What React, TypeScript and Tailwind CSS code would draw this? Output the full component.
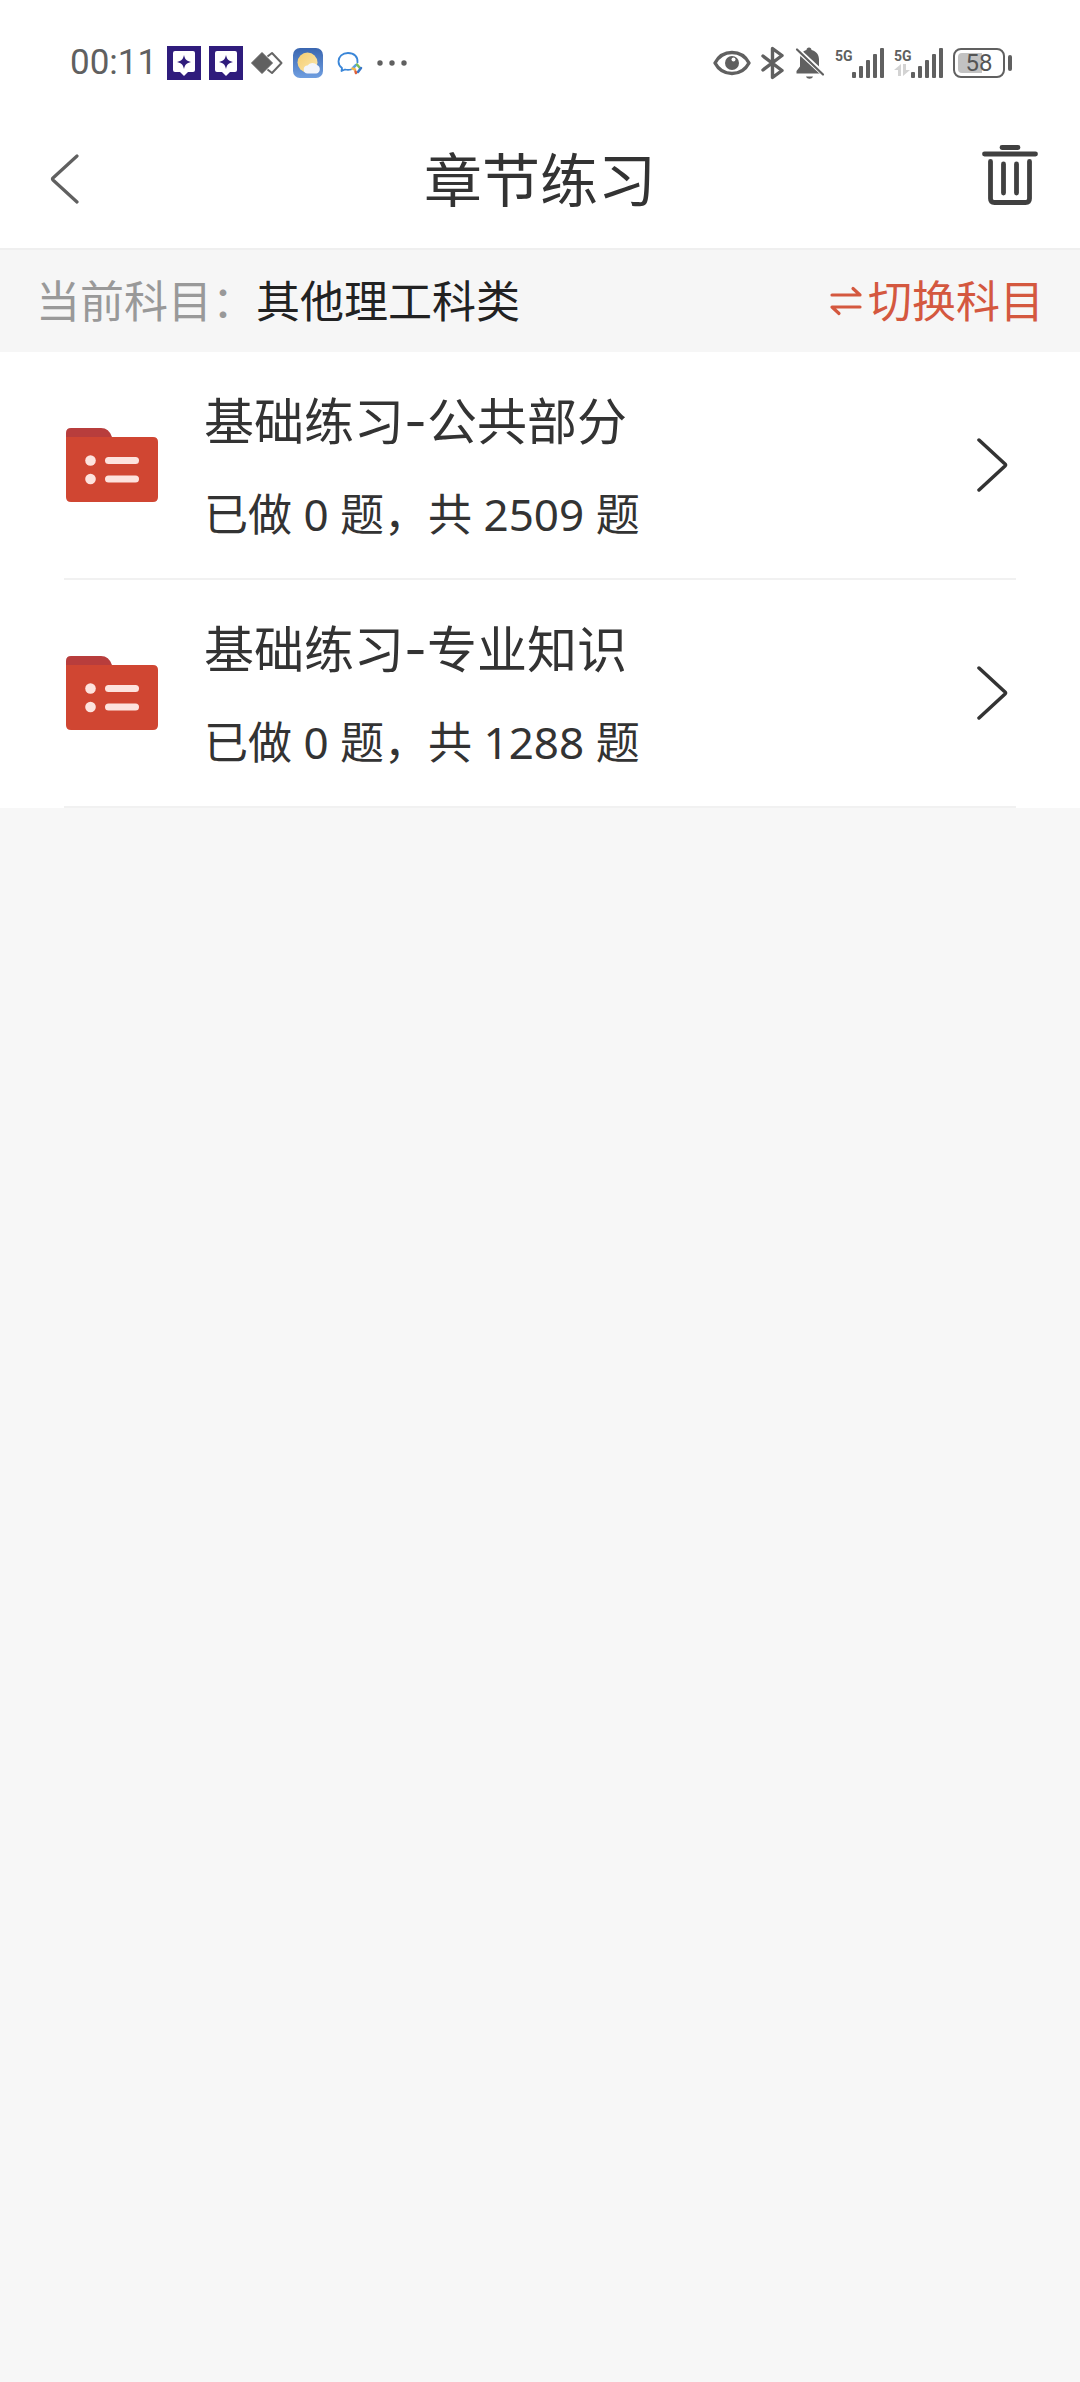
const chapters = [
  { id: 1, title: '基础练习', section: '公共部分', done: 0, total: 2509 },
  { id: 2, title: '基础练习', section: '专业知识', done: 0, total: 1288 },
]

function AppBadge() {
  return (
    <svg className="w-[34px] h-[34px]" viewBox="0 0 34 34" aria-hidden="true">
      <rect width="34" height="34" fill="#2f1c7c" />
      <path d="M8 5h18a2 2 0 0 1 2 2v17a2 2 0 0 1-2 2h-5l-4 4-4-4H8a2 2 0 0 1-2-2V7a2 2 0 0 1 2-2z" fill="#fff" />
      <path d="M17 9c1 4.500 2.500 6 7 7-4.500 1-6 2.500-7 7-1-4.500-2.500-6-7-7 4.500-1 6-2.500 7-7z" fill="#2f1c7c" />
    </svg>
  )
}

function DiamondsIcon() {
  return (
    <svg className="w-8 h-[34px]" viewBox="0 0 32 34" aria-hidden="true">
      <path d="M16.500 10.500 21 7l9.500 10L21 27l-4.500-3.500" fill="none" stroke="#666" strokeWidth="2" strokeLinejoin="round" />
      <path d="M11 6.500 21.500 17 11 27.500.5 17z" fill="#606060" stroke="#606060" strokeLinejoin="round" />
    </svg>
  )
}

function WeatherIcon() {
  return (
    <svg className="w-[30px] h-[30px]" viewBox="0 0 30 30" aria-hidden="true">
      <defs>
        <linearGradient id="sky" x1="0" y1="0" x2="0" y2="1">
          <stop offset="0" stopColor="#3a66b0" />
          <stop offset="1" stopColor="#6f9ee0" />
        </linearGradient>
        <linearGradient id="sun" x1="0" y1="0" x2="1" y2="1">
          <stop offset="0" stopColor="#f5cd70" />
          <stop offset="1" stopColor="#fbe6ae" />
        </linearGradient>
      </defs>
      <rect width="30" height="30" rx="7" fill="url(#sky)" />
      <circle cx="14.500" cy="14.500" r="10" fill="url(#sun)" />
      <path d="M15 25.500a4 4 0 0 1-.5-8 6 6 0 0 1 9.500-.5 4.500 4.500 0 0 1-.5 8.500z" fill="#f3f5fb" />
    </svg>
  )
}

function ChatIcon() {
  return (
    <svg className="w-[26px] h-[34px]" viewBox="0 0 26 34" fill="none" strokeLinecap="round" aria-hidden="true">
      <path d="M20.500 16.500C21 10.500 17 7 11 7 5.500 7 1.500 10.500 1.500 15.500c0 3 1.500 5 3.500 6.500L4.500 25l3.500-1.500c2 .5 4 .5 6 0" stroke="#3a86d8" strokeWidth="1.800" strokeLinejoin="round" />
      <path d="m16 22 3-3" stroke="#5b9ee0" strokeWidth="2.500" />
      <path d="m20 18.500 2.500 3" stroke="#7bbf5a" strokeWidth="2.500" />
      <path d="m24 22-3 4" stroke="#3a78c8" strokeWidth="2.500" />
      <path d="m15.500 22.500 2.500 1" stroke="#efb64a" strokeWidth="2.500" />
      <path d="m18.500 25.500.5 1.500" stroke="#e0603a" strokeWidth="2.500" />
    </svg>
  )
}

function DotsIcon() {
  return (
    <svg className="w-[30px] h-2" viewBox="0 0 30 8" fill="#606060" aria-hidden="true">
      <circle cx="3" cy="4" r="2.700" />
      <circle cx="15" cy="4" r="2.700" />
      <circle cx="27" cy="4" r="2.700" />
    </svg>
  )
}

function EyeIcon() {
  return (
    <svg className="w-[38px] h-[34px]" viewBox="0 0 38 34" aria-hidden="true">
      <path d="M2 17C6 9.500 12 6.500 19 6.500S32 9.500 36 17c-4 7.500-10 10.500-17 10.500S6 24.500 2 17z" fill="none" stroke="#606060" strokeWidth="3.400" strokeLinejoin="round" />
      <circle cx="19" cy="17" r="7" fill="#606060" />
      <circle cx="20.500" cy="13.500" r="2" fill="#fff" />
    </svg>
  )
}

function BluetoothIcon() {
  return (
    <svg className="w-6 h-[34px]" viewBox="0 0 24 34" aria-hidden="true">
      <path d="m2 10 19 14.500-9.500 7V2.500l9.500 7L2 24" fill="none" stroke="#606060" strokeWidth="3.400" strokeLinejoin="round" strokeLinecap="round" />
    </svg>
  )
}

function BellOffIcon() {
  return (
    <svg className="w-[30px] h-[34px]" viewBox="0 0 30 34" aria-hidden="true">
      <path d="M14 1.500c1.500 0 2.500 1 2.500 2.500 4.500 1 7.500 4.500 7.500 9.500v7l3 4.500v2.500H1.500V25L5 20.500v-7C5 8.500 7.500 5 11.500 4c0-1.500 1-2.500 2.500-2.500z" fill="#606060" />
      <path d="M11 30.500h7c-1 3-6 3-7 0z" fill="#606060" />
      <path d="m0 1.500 29 27" stroke="#fff" strokeWidth="5" />
      <path d="m2 3.500 26 25" stroke="#606060" strokeWidth="2.200" strokeLinecap="round" />
    </svg>
  )
}

function Signal({ active }: { active?: boolean }) {
  return (
    <div className="flex h-[30px]">
      <div className="flex flex-col w-[17px]">
        <span className="font-['Roboto'] text-sm leading-4 font-bold text-[#606060]">5G</span>
        {active && (
          <svg className="w-4 h-3" viewBox="0 0 16 12" fill="#d3d3d3" aria-hidden="true">
            <path d="M7 0v12H4V6H0zM9 12V0h3v6h4z" />
          </svg>
        )}
      </div>
      <svg className="w-8 h-[30px]" viewBox="0 0 32 30" fill="#606060" aria-hidden="true">
        <rect x="0" y="24" width="4" height="6" rx="1" />
        <rect x="7" y="18" width="4" height="12" rx="1" />
        <rect x="14" y="12" width="4" height="18" rx="1" />
        <rect x="21" y="6" width="4" height="24" rx="1" />
        <rect x="28" y="0" width="4" height="30" rx="1" />
      </svg>
    </div>
  )
}

function Battery() {
  return (
    <div className="flex items-center gap-[3px]">
      <div className="w-[52px] h-[30px] border-2 border-[#606060] rounded-lg p-[3px]">
        <div className="h-full rounded-sm bg-linear-to-r from-[#c2c2c2] from-58% to-transparent to-58% flex items-center justify-center font-['Roboto'] text-2xl leading-none text-[#555]">
          58
        </div>
      </div>
      <div className="w-1 h-4 rounded-sm bg-[#606060]" />
    </div>
  )
}

function StatusBar() {
  return (
    <div className="flex items-center justify-between h-[126px] pl-[70px] pr-[68px]">
      <div className="flex items-center gap-2">
        <span className="font-['Roboto'] text-[35px] leading-10 text-[#606060] w-[89px]">00:11</span>
        <AppBadge />
        <AppBadge />
        <DiamondsIcon />
        <div className="flex items-center gap-[14px] pl-[2px]">
          <WeatherIcon />
          <ChatIcon />
          <DotsIcon />
        </div>
      </div>
      <div className="flex items-center gap-[10px]">
        <EyeIcon />
        <BluetoothIcon />
        <BellOffIcon />
        <Signal />
        <Signal active />
        <Battery />
      </div>
    </div>
  )
}

function Header() {
  return (
    <header className="flex items-center justify-between h-[108px] pl-12 pr-10">
      <button type="button" aria-label="返回" className="w-13">
        <svg className="w-8 h-[52px]" viewBox="0 0 32 52" fill="none" aria-hidden="true">
          <path d="M29 2 5 24q-1 1 0 2l24 22" stroke="#606060" strokeWidth="3.200" strokeLinecap="round" />
        </svg>
      </button>
      <h1 className="text-[58px] leading-[72px] text-[#333]">章节练习</h1>
      <button type="button" aria-label="清空" className="w-15">
        <svg className="w-15 h-18" viewBox="0 0 60 72" fill="none" stroke="#404040" strokeWidth="4.800" strokeLinecap="round" aria-hidden="true">
          <path d="M22 3.500h16M4.500 10h51" />
          <path d="M10.500 17.500v37q0 4 4 4h31q4 0 4-4v-37" />
          <path d="M23.500 20v29M36.500 20v29" />
        </svg>
      </button>
    </header>
  )
}

function SwapIcon() {
  return (
    <svg className="w-8 h-8" viewBox="0 0 32 32" fill="none" stroke="#d4583f" strokeWidth="3.200" strokeLinecap="round" strokeLinejoin="round" aria-hidden="true">
      <path d="M2 10h28l-7-6.500M30 22H2l7 6.500" />
    </svg>
  )
}

function FolderIcon() {
  return (
    <svg className="w-24 h-[76px] shrink-0" viewBox="0 0 96 76" aria-hidden="true">
      <path d="M2 20V6q0-5 5-5h30q8 0 11 9v10z" fill="#b83d3c" />
      <path d="M2 10h87q5 0 5 5v55q0 5-5 5H7q-5 0-5-5z" fill="#d04632" />
      <g fill="#fde3de">
        <circle cx="26.500" cy="33.500" r="5.300" />
        <circle cx="26.500" cy="52" r="5.300" />
        <rect x="41" y="30" width="34" height="7" rx="3.500" />
        <rect x="41" y="48.500" width="34" height="7" rx="3.500" />
      </g>
    </svg>
  )
}

export default function App() {
  return (
    <div className="min-h-screen bg-[#f7f7f7] font-['Noto_Sans','Noto_Sans_CJK_SC',sans-serif]">
      <div className="bg-white pb-[14px]">
        <StatusBar />
        <Header />
      </div>

      <div className="flex items-center justify-between h-[104px] px-9 border-t-2 border-[#efefef] bg-[#f6f6f6] text-[44px] leading-[64px]">
        <p className="text-[#222]">
          <span className="text-[#999]">当前科目：</span>
          其他理工科类
        </p>
        <button type="button" className="flex items-center gap-[6px] text-[#d4583f]">
          <SwapIcon />
          切换科目
        </button>
      </div>

      <ul className="bg-white text-[#333]">
        {chapters.map((c) => (
          <li key={c.id} className="mx-16 border-b-2 border-[#f1f1f1]">
            <button type="button" className="flex items-center gap-11 w-full h-[226px] pr-2 text-left">
              <FolderIcon />
              <span className="flex-1 flex flex-col gap-5 pt-1">
                <span className="text-[50px] leading-[72px]">
                  {c.title}
                  <span className="font-['Inter']">-</span>
                  {c.section}
                </span>
                <span className="text-[44px] leading-[72px]">
                  已做 {c.done} 题，共 {c.total} 题
                </span>
              </span>
              <svg className="w-8 h-14" viewBox="0 0 32 56" fill="none" aria-hidden="true">
                <path d="m3 3 26 24q1 1 0 2L3 53" stroke="#333" strokeWidth="3.500" strokeLinecap="round" />
              </svg>
            </button>
          </li>
        ))}
      </ul>
    </div>
  )
}
